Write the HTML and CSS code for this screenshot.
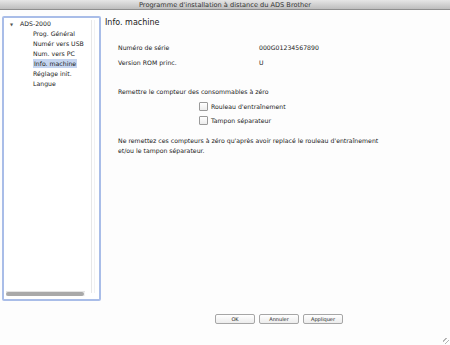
FILE: index.html
```html
<!DOCTYPE html>
<html lang="fr">
  <head>
    <meta charset="utf-8">
    <title>Programme d'installation à distance du ADS Brother</title>
    <link rel="stylesheet" href="styles.css">
  </head>
  <body>
    <div class="window">
      <div class="titlebar">Programme d'installation à distance du ADS Brother</div>
      <div class="main">
        <div class="sidebar">
          <div class="tree">
            <div class="node root"><span class="arrow">&#9660;</span>ADS-2000</div>
            <div class="node">Prog. Général</div>
            <div class="node">Numér vers USB</div>
            <div class="node">Num. vers PC</div>
            <div class="node"><span class="selected">Info. machine</span></div>
            <div class="node">Réglage init.</div>
            <div class="node">Langue</div>
          </div>
          <div class="hscroll"><div class="thumb"></div></div>
        </div>
        <div class="pane">
          <h1>Info. machine</h1>
          <div class="info">
            <div class="row"><span class="label">Numéro de série</span><span>000G01234567890</span></div>
            <div class="row"><span class="label">Version ROM princ.</span><span>U</span></div>
          </div>
          <p class="reset">Remettre le compteur des consommables à zéro</p>
          <div class="checks">
            <label class="check"><span class="box"></span>Rouleau d'entraînement</label>
            <label class="check"><span class="box"></span>Tampon séparateur</label>
          </div>
          <p class="note">Ne remettez ces compteurs à zéro qu'après avoir replacé le rouleau d'entraînement<br>et/ou le tampon séparateur.</p>
        </div>
      </div>
      <div class="footer">
        <button>OK</button>
        <button>Annuler</button>
        <button>Appliquer</button>
      </div>
      <div class="grip"></div>
    </div>
  </body>
</html>
```

FILE: styles.css
```css
html, body {
  margin: 0;
  padding: 0;
}
body {
  background: #fdfdfd;
  font-family: "DejaVu Sans", Verdana, sans-serif;
  font-size: 6.2px;
  color: #1a1a1a;
}
.window {
  position: relative;
  width: 450px;
  height: 345px;
  overflow: hidden;
}
.titlebar {
  height: 10px;
  line-height: 10px;
  text-align: center;
  font-size: 6.6px;
  color: #333;
  background: linear-gradient(to bottom, #e6e6e6, #bdbdbd);
  border-bottom: 1px solid #8e8e8e;
  box-sizing: border-box;
}
.main {
  display: flex;
  padding: 6px 0 0 2px;
  height: 285px;
}
.sidebar {
  position: relative;
  width: 99px;
  box-sizing: border-box;
  border: 2px solid #a9bde8;
  border-radius: 2px;
  background: #fff;
  display: flex;
  flex-direction: column;
}
.sidebar::after {
  content: "";
  position: absolute;
  top: 2px;
  right: 4px;
  bottom: 6px;
  width: 2px;
  border-left: 1px solid #e8e8e8;
  border-right: 1px solid #f2f2f2;
}
.tree {
  flex: 1;
  padding-top: 1px;
}
.node {
  height: 10px;
  line-height: 10px;
  padding-left: 29px;
}
.node.root {
  padding-left: 6px;
}
.arrow {
  display: inline-block;
  width: 10px;
  font-size: 4px;
  color: #555;
}
.selected {
  background: #c5d5f0;
  padding: 1px 1px;
}
.hscroll {
  height: 4px;
  margin: 0 14px 3px 2px;
  background: #f2f2f2;
  border-top: 1px solid #e4e4e4;
}
.thumb {
  width: 78px;
  height: 4px;
  border-radius: 2px;
  background: #a9a9a9;
}
.pane {
  flex: 1;
  padding-left: 4px;
}
h1 {
  margin: 2px 0 0 0;
  font-size: 8px;
  font-weight: normal;
  line-height: 10px;
}
.info {
  margin: 15px 0 0 13px;
}
.row {
  display: flex;
  height: 15px;
  line-height: 10px;
}
.label {
  width: 141px;
}
.reset {
  margin: 14px 0 0 13px;
  line-height: 10px;
}
.checks {
  margin: 2px 0 0 94px;
}
.check {
  display: flex;
  align-items: center;
  height: 14px;
}
.box {
  width: 7px;
  height: 7px;
  margin-right: 3px;
  border: 1px solid #9a9a9a;
  border-radius: 1px;
  background: linear-gradient(to bottom, #fff, #ececec);
}
.note {
  margin: 9px 0 0 13px;
  line-height: 10px;
}
.footer {
  display: flex;
  gap: 4px;
  padding: 13px 0 0 215px;
}
button {
  width: 40px;
  height: 10px;
  padding: 0;
  font-family: inherit;
  font-size: 5px;
  color: #222;
  background: linear-gradient(to bottom, #fff, #ececec);
  border: 1px solid #a6a6a6;
  border-radius: 2px;
}
.grip {
  position: absolute;
  right: 1px;
  bottom: 1px;
  width: 6px;
  height: 6px;
  background: repeating-linear-gradient(135deg, transparent 0 2px, #b5b5b5 2px 3px);
}
```
